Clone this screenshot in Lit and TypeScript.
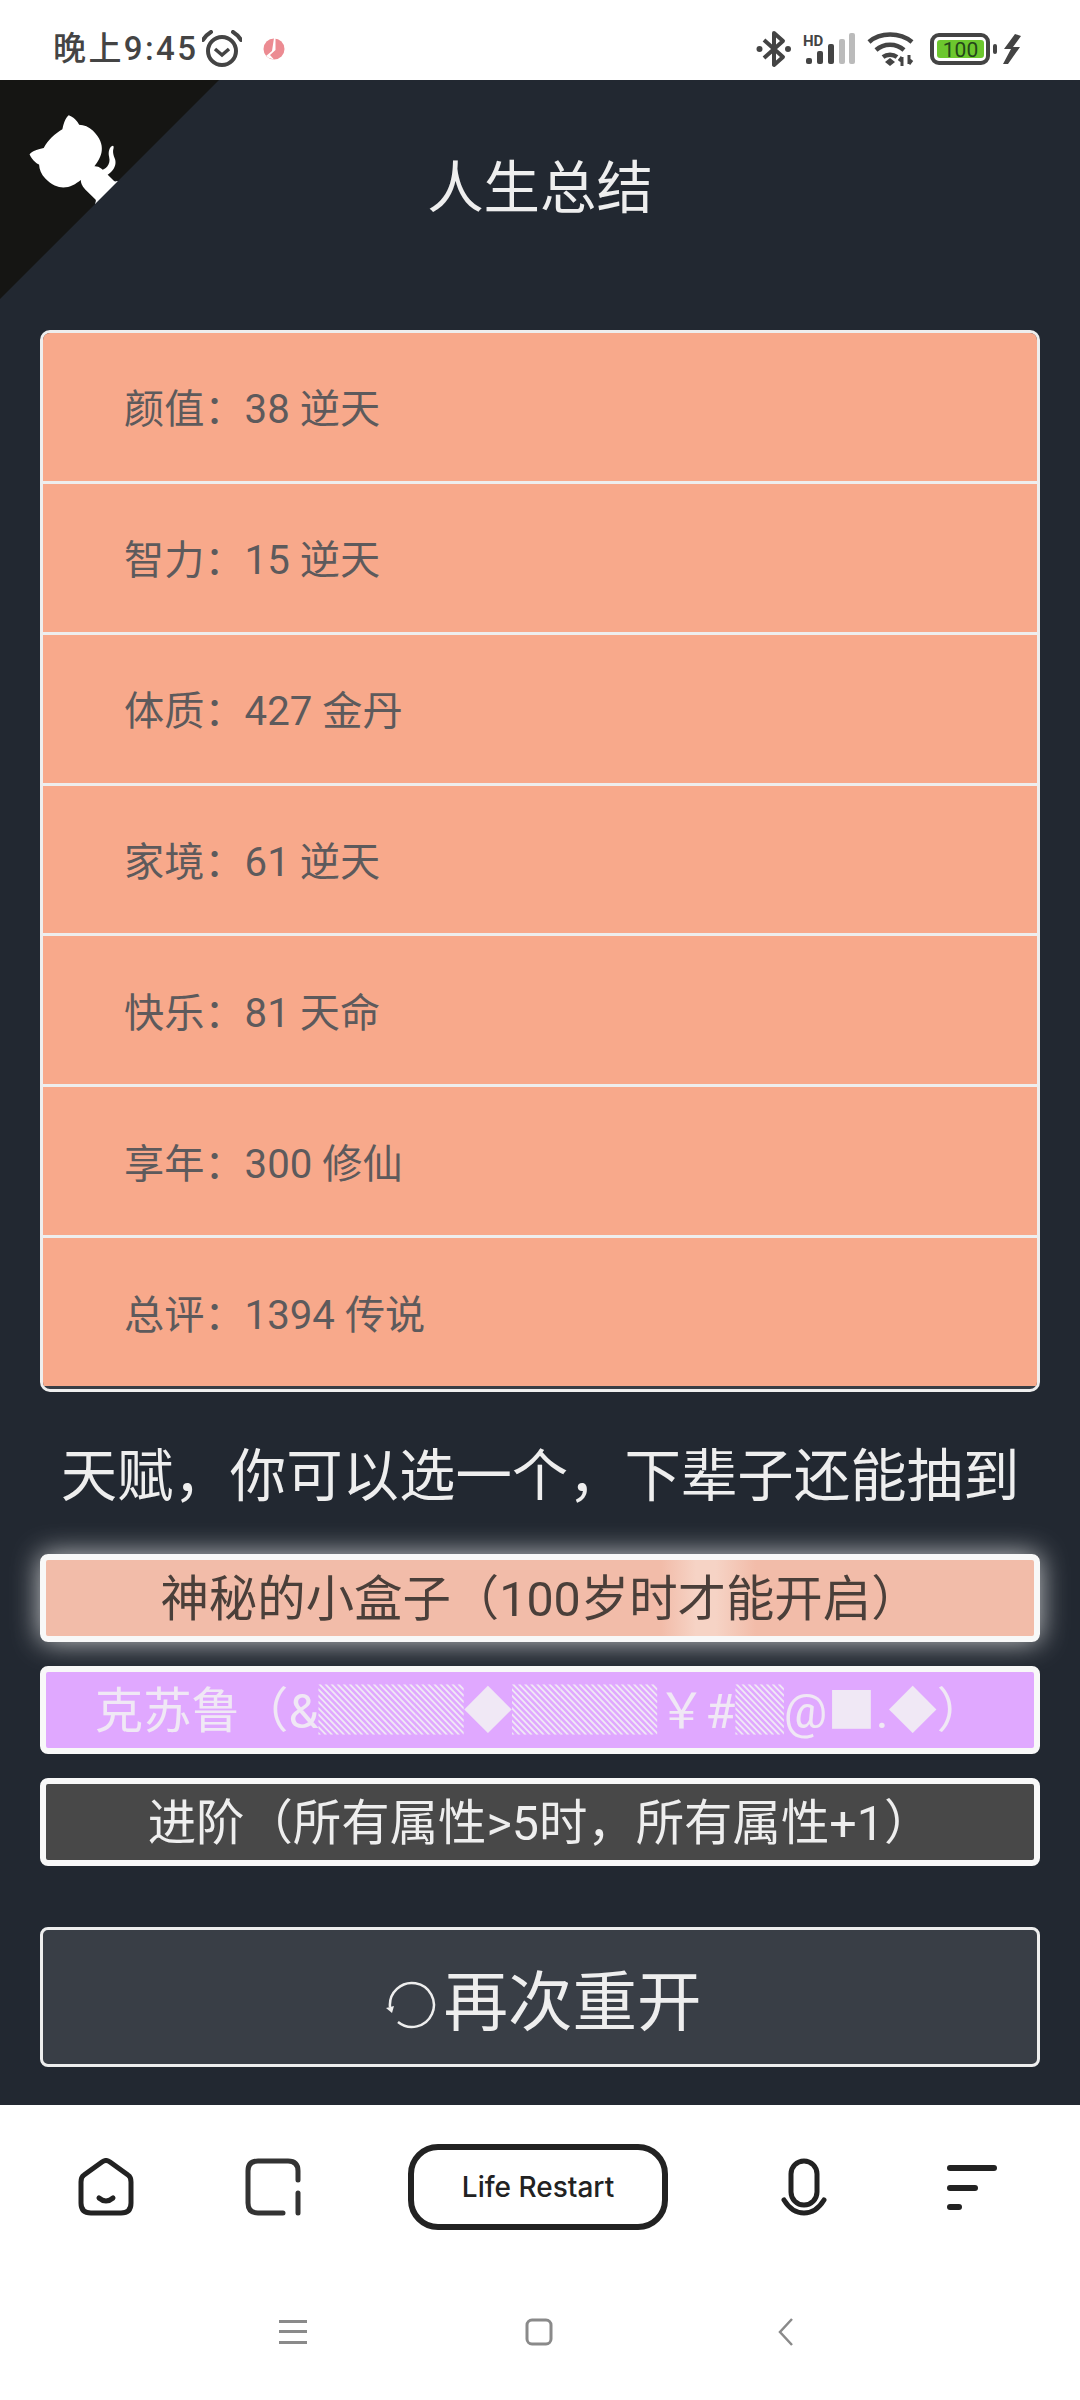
import { LitElement, html, css, svg } from 'lit'
import { customElement } from 'lit/decorators.js'

const rows = [
  ['颜值', '38 逆天'],
  ['智力', '15 逆天'],
  ['体质', '427 金丹'],
  ['家境', '61 逆天'],
  ['快乐', '81 天命'],
  ['享年', '300 修仙'],
  ['总评', '1394 传说'],
]

const talents = [
  { text: '神秘的小盒子（100岁时才能开启）', cls: 'peach' },
  { text: '克苏鲁（&▓▓▓◆▓▓▓￥#▓@■.◆）', cls: 'purple' },
  { text: '进阶（所有属性>5时，所有属性+1）', cls: 'grey' },
]

const cornerCat = svg`
  <path d="M0,0 L115,115 L130,115 L142,142 L250,250 L250,0 Z" fill="#151513"></path>
  <path d="M128.3,109.0 C113.8,99.7 119.0,89.6 119.0,89.6 C122.0,82.7 120.5,78.6 120.5,78.6 C119.2,72.0 123.4,76.3 123.4,76.3 C127.3,80.9 125.5,87.3 125.5,87.3 C122.9,97.6 130.6,101.9 134.4,103.2" fill="#fff"></path>
  <path d="M115.0,115.0 C114.9,115.1 118.7,116.5 119.8,115.4 L133.7,101.6 C136.9,99.2 139.9,98.4 142.2,98.6 C133.8,88.0 127.5,74.4 143.8,58.0 C148.5,53.4 154.0,51.2 159.7,51.0 C160.3,49.4 163.2,43.6 171.4,40.1 C171.4,40.1 176.1,42.5 178.8,56.2 C183.1,58.6 187.2,61.8 190.9,65.4 C194.5,69.0 197.7,73.2 200.1,77.6 C213.8,80.2 216.3,84.9 216.3,84.9 C212.7,93.1 206.9,96.0 205.4,96.6 C205.1,102.4 203.0,107.8 198.3,112.5 C181.9,128.9 168.3,122.5 157.7,114.1 C157.9,116.9 156.7,120.9 152.7,124.9 L141.0,136.5 C139.8,137.7 141.6,141.9 141.8,141.8 Z" fill="#fff"></path>
`

@customElement('app-root')
export class AppRoot extends LitElement {
  static styles = css`
    :host {
      display: block;
      width: 1080px;
      height: 2400px;
      overflow: hidden;
      background: #fff;
      font-family: Roboto, 'Noto Sans CJK SC', sans-serif;
    }
    .status {
      height: 80px;
      box-sizing: border-box;
      padding: 18px 58px 0 53px;
      display: flex;
      align-items: center;
      color: #444;
      background: #fff;
    }
    .clock {
      font-size: 33px;
      font-weight: 500;
      letter-spacing: 2.4px;
      line-height: 40px;
    }
    .alarm { margin-left: 4px; }
    .pie { margin-left: 21px; }
    .status-right {
      margin-left: auto;
      display: flex;
      align-items: center;
    }
    main {
      position: relative;
      height: 2025px;
      box-sizing: border-box;
      background: #222831;
      padding: 0 40px;
      overflow: hidden;
      color: #eeeeee;
    }
    .corner {
      position: absolute;
      left: 0;
      top: 0;
      transform: scaleX(-1);
    }
    h1 {
      margin: 0;
      padding-top: 64px;
      height: 250px;
      box-sizing: border-box;
      text-align: center;
      font-size: 56.4px;
      font-weight: 400;
      line-height: 90px;
    }
    ul {
      list-style: none;
      margin: 0;
      padding: 0 0 3px;
      height: 1062px;
      box-sizing: border-box;
      border: 3px solid #eeeeee;
      border-radius: 10px;
      background: #393e46;
      overflow: hidden;
      display: flex;
      flex-direction: column;
    }
    li {
      flex: 1;
      display: flex;
      align-items: center;
      padding-left: 81px;
      padding-bottom: 2px;
      background: #f8a98b;
      color: #5d5a5c;
      font-size: 40.2px;
      border-bottom: 3px solid #eeeeee;
    }
    li:last-child {
      border-bottom: none;
    }
    h2 {
      margin: 0;
      padding-top: 43px;
      height: 162px;
      box-sizing: border-box;
      text-align: center;
      font-size: 56.4px;
      font-weight: 400;
      line-height: 84px;
      white-space: nowrap;
    }
    .talents {
      display: flex;
      flex-direction: column;
      gap: 24px;
    }
    .talent {
      height: 88px;
      box-sizing: border-box;
      border: 6px solid #f8f8f8;
      border-radius: 8px;
      padding-bottom: 6px;
      display: flex;
      align-items: center;
      justify-content: center;
      font-size: 48.4px;
      white-space: nowrap;
    }
    .peach {
      color: #4a3f3a;
      background: linear-gradient(90deg, #f2bca9 0, #f2bca9 615px, #f6d3c5 650px, #f6d3c5 670px, #f2bca9 710px);
      box-shadow: 0 0 28px rgba(255, 255, 255, 0.75);
    }
    .purple {
      color: #f0e8f5;
      background: #e0a8ff;
    }
    .grey {
      color: #eeeeee;
      background: #484848;
    }
    .again {
      margin-top: 61px;
      height: 140px;
      box-sizing: border-box;
      border: 3px solid #eeeeee;
      border-radius: 8px;
      background: #393e46;
      display: flex;
      align-items: center;
      justify-content: center;
      font-size: 64.5px;
      color: #eeeeee;
      padding-left: 6px;
    }
    .again svg { margin-right: 7px; margin-top: 15px; }
    .tabs {
      height: 164px;
      display: grid;
      grid-template-columns: 212px 122px 408px 124px 212px;
      justify-items: center;
      align-items: center;
    }
    .pill {
      width: 260px;
      height: 86px;
      box-sizing: border-box;
      border: 6px solid #222;
      border-radius: 30px;
      display: flex;
      align-items: center;
      justify-content: center;
      color: #222;
      font-family: Inter, Roboto, sans-serif;
      font-weight: 500;
      font-size: 28px;
    }
    .sysnav {
      height: 126px;
      box-sizing: border-box;
      padding-left: 279px;
      display: flex;
      align-items: center;
    }
    .sysnav svg:nth-child(2) { margin-left: 218px; }
    .sysnav svg:nth-child(3) { margin-left: 224px; }
  `

  renderStatusIcons() {
    return html`
      <div class="status-right">
        <svg width="36" height="38" viewBox="0 0 36 38" fill="none" stroke="#444" stroke-width="4">
          <path d="M8 10 L27 27 L18 35 V3 L27 11 L8 28" stroke-linejoin="round" />
          <circle cx="3.5" cy="19" r="3" fill="#444" stroke="none" />
          <circle cx="32" cy="19" r="3" fill="#444" stroke="none" />
        </svg>
        <svg width="52" height="34" viewBox="0 0 52 34" style="margin-left:11px">
          <text x="0" y="14" font-size="15" font-weight="700" fill="#444" font-family="Roboto">HD</text>
          <rect x="3" y="26" width="6" height="6" rx="2" fill="#444" />
          <rect x="14" y="19" width="6" height="13" rx="2" fill="#444" />
          <rect x="25" y="12" width="6" height="20" rx="2" fill="#444" />
          <rect x="36" y="7" width="6" height="25" rx="2" fill="#bbb" />
          <rect x="46" y="1" width="6" height="31" rx="2" fill="#bbb" />
        </svg>
        <svg width="48" height="36" viewBox="0 0 48 36" fill="none" stroke="#444" stroke-width="4.5" style="margin-left:12px">
          <path d="M2 11 C13 1 33 1 45 11" />
          <path d="M9 19 C17 12 29 12 37 19" />
          <path d="M16 26 C20 23 26 23 30 26" />
          <path d="M18 31 L23 27 L28 31 L23 35 Z" fill="#444" stroke="none" />
          <path d="M35 35 V26 M35 26 l-3 4 M42 24 V33 M42 33 l3 -4" stroke-width="3" />
        </svg>
        <svg width="68" height="32" viewBox="0 0 68 32" style="margin-left:15px">
          <rect x="2" y="2" width="56" height="28" rx="7" fill="#fff" stroke="#444" stroke-width="4" />
          <rect x="7" y="7" width="47" height="18" rx="3" fill="#6cc72e" />
          <text x="30.5" y="24" text-anchor="middle" font-size="21" fill="#24461a" font-family="Roboto">100</text>
          <rect x="63" y="11" width="4" height="10" rx="2" fill="#444" />
        </svg>
        <svg width="20" height="30" viewBox="0 0 20 30" style="margin-left:4px">
          <path d="M13 0 L2 15 L9 15 L1 30 L6 30 L18 13 L11 13 L19 2 Z" fill="#444" />
        </svg>
      </div>
    `
  }

  renderTabs() {
    return html`
      <nav class="tabs">
        <svg width="56" height="58" viewBox="0 0 56 58" fill="none" stroke="#222" stroke-width="5" stroke-linecap="round" stroke-linejoin="round">
          <path d="M24 4 Q28 1 32 4 L50 17 Q53 19 53 24 V45 Q53 55 43 55 H13 Q3 55 3 45 V24 Q3 19 6 17 Z" />
          <path d="M21 40 Q28 46 35 40" />
        </svg>
        <svg width="56" height="58" viewBox="0 0 56 58" fill="none" stroke="#333" stroke-width="5" stroke-linecap="round">
          <path d="M38 55 H13 Q3 55 3 45 V13 Q3 3 13 3 H43 Q53 3 53 13 V22" />
          <path d="M53 35 V55" />
        </svg>
        <div class="pill">Life Restart</div>
        <svg width="46" height="58" viewBox="0 0 46 58" fill="none" stroke="#222" stroke-width="5" stroke-linecap="round">
          <rect x="10" y="3" width="26" height="44" rx="13" />
          <path d="M3 42 Q11 55 23 55 Q35 55 43 42" />
        </svg>
        <svg width="50" height="46" viewBox="0 0 50 46" fill="none" stroke="#222" stroke-width="6" stroke-linecap="round">
          <path d="M3 4 H47" />
          <path d="M3 24 H28" />
          <path d="M3 43 H12" />
        </svg>
      </nav>
    `
  }

  render() {
    return html`
      <div class="status">
        <span class="clock">晚上9:45</span>
        <svg class="alarm" width="40" height="38" viewBox="0 0 40 38" fill="none" stroke="#444" stroke-width="4">
          <circle cx="20" cy="21" r="14" />
          <path d="M13 19 L20 25 L27 19" stroke-width="3.5" />
          <path d="M1 10 Q4 5 9 2 M39 10 Q36 5 31 2" stroke-linecap="round" />
        </svg>
        <svg class="pie" width="22" height="22" viewBox="0 0 22 22">
          <circle cx="11" cy="11" r="10.5" fill="#ec8b92" />
          <path d="M11 0 H12.5 V12 L7 17 L11 21.5 Q6 21 3 18 L9 13 Z" fill="#fff" />
        </svg>
        ${this.renderStatusIcons()}
      </div>
      <main>
        <svg class="corner" width="219" height="219" viewBox="0 0 250 250">${cornerCat}</svg>
        <h1>人生总结</h1>
        <ul>
          ${rows.map(([k, v]) => html`<li>${k}：${v}</li>`)}
        </ul>
        <h2>天赋，你可以选一个，下辈子还能抽到</h2>
        <div class="talents">
          ${talents.map((t) => html`<div class="talent ${t.cls}">${t.text}</div>`)}
        </div>
        <div class="again">
          <svg width="52" height="48" viewBox="0 0 52 48" fill="none" stroke="#eeeeee" stroke-width="2.5">
            <path d="M14 41 A22 22 0 1 0 6 26" />
            <path d="M2 27 L8 32 L10 25 Z" fill="#eeeeee" stroke="none" />
          </svg>
          <span>再次重开</span>
        </div>
      </main>
      ${this.renderTabs()}
      <div class="sysnav">
        <svg width="28" height="24" viewBox="0 0 28 24" fill="#8a8a8a">
          <rect y="0" width="28" height="3" />
          <rect y="10" width="28" height="3" />
          <rect y="21" width="28" height="3" />
        </svg>
        <svg width="28" height="28" viewBox="0 0 28 28" fill="none" stroke="#8a8a8a" stroke-width="3">
          <rect x="2" y="2" width="24" height="24" rx="5" />
        </svg>
        <svg width="17" height="28" viewBox="0 0 17 28" fill="none" stroke="#8a8a8a" stroke-width="2.5">
          <path d="M15 1 L3 14 L15 27" />
        </svg>
      </div>
    `
  }
}
